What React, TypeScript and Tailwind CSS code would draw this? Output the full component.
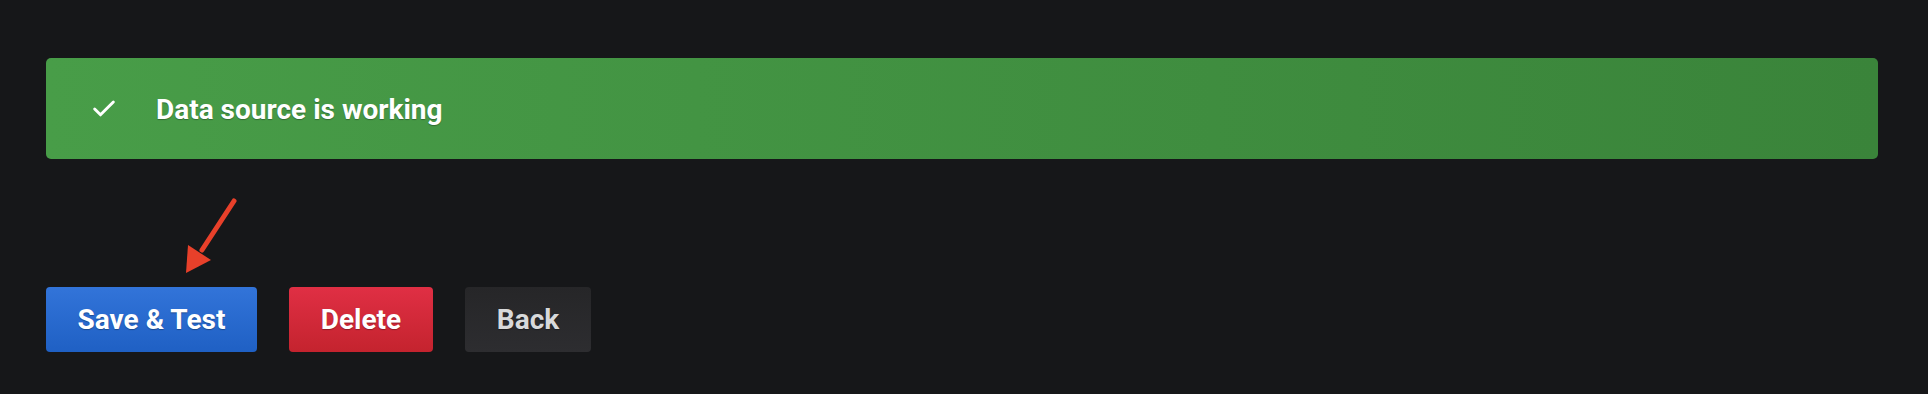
import { Check } from "lucide-react";

const font = "font-['Roboto','Liberation_Sans',sans-serif]";
const shadow = "[text-shadow:0_1px_1px_rgba(0,0,0,0.3)]";

export default function App() {
  return (
    <div className={`relative flex h-[394px] flex-col bg-[#161719] pl-[46px] pr-[50px] pt-[58px] ${font}`}>
      {/* success alert */}
      <div className="flex h-[101px] items-center rounded-[5px] bg-gradient-to-r from-[#489d48] to-[#3a843a] pl-[44px]">
        <Check className="h-[28px] w-[28px] text-white" strokeWidth={2.5} />
        <span className={`ml-[38px] pt-[2px] text-[28px] font-bold leading-none text-white ${shadow}`}>Data source is working</span>
      </div>

      {/* action buttons */}
      <div className="mt-[128px] flex gap-8">
        <button
          type="button"
          className={`flex h-[65px] w-[211px] items-center justify-center rounded-[4px] bg-gradient-to-b from-[#3274d9] to-[#1f60c4] pt-[1px] text-[28px] font-bold leading-none text-white ${shadow}`}
        >
          Save &amp; Test
        </button>
        <button
          type="button"
          className={`flex h-[65px] w-[144px] items-center justify-center rounded-[4px] bg-gradient-to-b from-[#e02f44] to-[#c4232e] pt-[1px] text-[28px] font-bold leading-none text-white ${shadow}`}
        >
          Delete
        </button>
        <button
          type="button"
          className={`flex h-[65px] w-[126px] items-center justify-center rounded-[4px] bg-gradient-to-b from-[#262628] to-[#2d2d30] pt-[1px] text-[28px] font-bold leading-none text-[#d8d9da] ${shadow}`}
        >
          Back
        </button>
      </div>

      {/* annotation arrow */}
      <svg className="absolute left-[180px] top-[196px]" width="60" height="82" viewBox="0 0 60 82">
        <line x1="54" y1="5" x2="22" y2="54" stroke="#e8402a" strokeWidth="5" strokeLinecap="round" />
        <polygon points="6,77 8,49 31,64" fill="#e8402a" />
      </svg>
    </div>
  );
}
